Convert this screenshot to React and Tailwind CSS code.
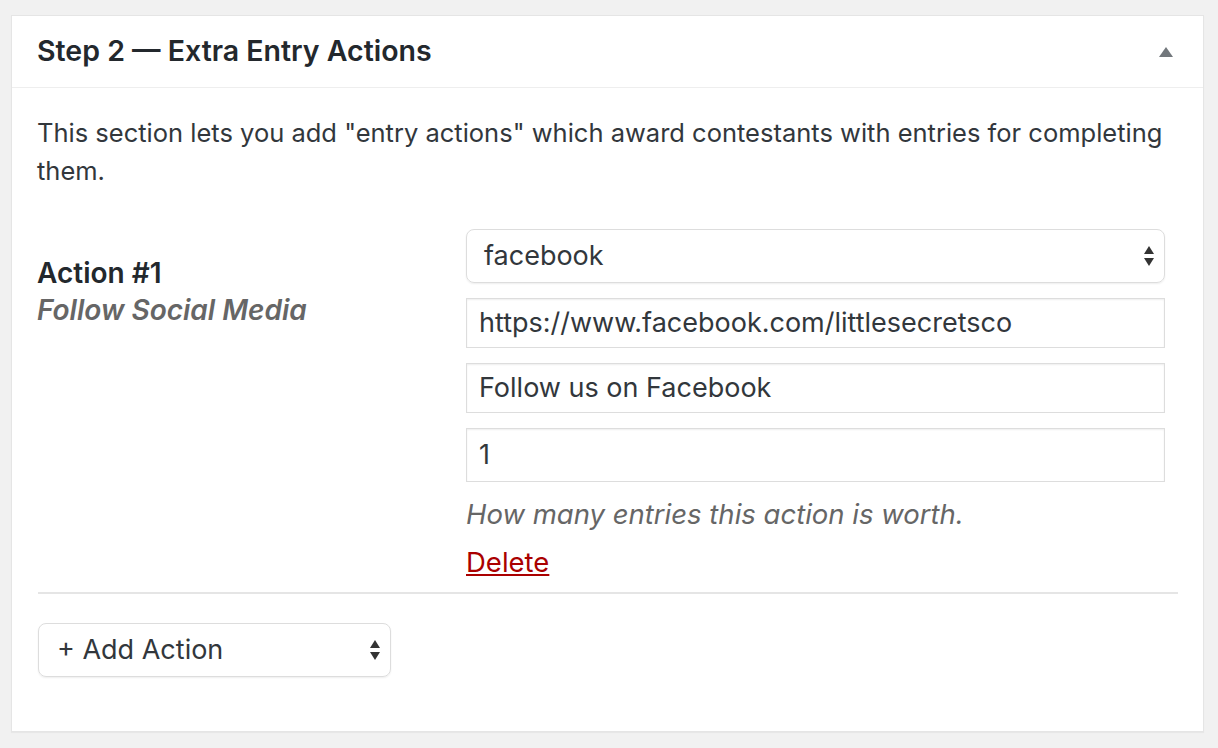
import React from "react";

function SelectArrows() {
  return (
    <svg width="12" height="22" viewBox="0 0 12 22" className="shrink-0">
      <path d="M6 1 L11 9 L1 9 Z" fill="#333" />
      <path d="M6 21 L11 13 L1 13 Z" fill="#333" />
    </svg>
  );
}

export default function App() {
  const font = { fontFamily: "Inter, 'Noto Sans', sans-serif" };
  return (
    <div className="w-[1218px] h-[748px] bg-[#f1f1f1] pt-[15px] pl-[11px]" style={font}>
      <div className="w-[1193px] h-[717px] bg-white border border-[#e5e5e5] shadow-[0_1px_1px_rgba(0,0,0,0.04)] flex flex-col">
        {/* Header */}
        <div className="h-[72px] shrink-0 border-b border-[#eee] flex items-center justify-between pl-[25px] pr-[29px]">
          <h2 className="text-[28.5px] font-semibold text-[#23282d]">
            Step 2 — Extra Entry Actions
          </h2>
          <svg width="16" height="12" viewBox="0 0 16 12">
            <path d="M8 1 L15 11 L1 11 Z" fill="#72777c" />
          </svg>
        </div>

        {/* Body */}
        <div className="pt-[26px] pl-[25px] pr-[38px]">
          <p className="text-[25.5px] leading-[38px] text-[#32373c]">
            This section lets you add "entry actions" which award contestants with entries for completing them.
          </p>

          <div className="mt-[39px] flex">
            <div className="w-[429px] shrink-0 pt-[26px]">
              <div className="text-[28px] leading-[37px] font-semibold text-[#23282d]">Action #1</div>
              <div className="text-[28px] leading-[37px] font-semibold italic text-[#666]">Follow Social Media</div>
            </div>
            <div className="flex-1 flex flex-col">
              <div className="h-[54px] rounded-[8px] border border-[#ddd] shadow-[0_1px_2px_rgba(0,0,0,0.07)] flex items-center justify-between pl-[17px] pr-[9px] text-[27px] text-[#32373c]">
                <span>facebook</span>
                <SelectArrows />
              </div>
              <div className="mt-[15px] h-[50px] border border-[#ddd] shadow-[inset_0_1px_2px_rgba(0,0,0,0.07)] flex items-center pl-[12px] text-[27px] text-[#32373c]">
                https://www.facebook.com/littlesecretsco
              </div>
              <div className="mt-[15px] h-[50px] border border-[#ddd] shadow-[inset_0_1px_2px_rgba(0,0,0,0.07)] flex items-center pl-[12px] text-[27px] text-[#32373c]">
                Follow us on Facebook
              </div>
              <div className="mt-[15px] h-[54px] border border-[#ddd] shadow-[inset_0_1px_2px_rgba(0,0,0,0.07)] flex items-center pl-[12px] text-[27px] text-[#32373c]">
                1
              </div>
              <div className="mt-[14px] text-[27.5px] leading-[36px] italic text-[#666]">
                How many entries this action is worth.
              </div>
              <a href="#" className="mt-[15px] text-[27.5px] leading-[30px] text-[#a00] underline self-start">
                Delete
              </a>
            </div>
          </div>
        </div>

        <div className="mt-[15px] ml-[26px] mr-[25px] border-t-2 border-[#e5e5e5]" />

        <div className="pt-[29px] pl-[26px]">
          <div className="w-[353px] h-[54px] rounded-[8px] border border-[#ddd] shadow-[0_1px_2px_rgba(0,0,0,0.07)] flex items-center justify-between pl-[18px] pr-[9px] text-[27px] text-[#32373c]">
            <span>+ Add Action</span>
            <SelectArrows />
          </div>
        </div>
      </div>
    </div>
  );
}
